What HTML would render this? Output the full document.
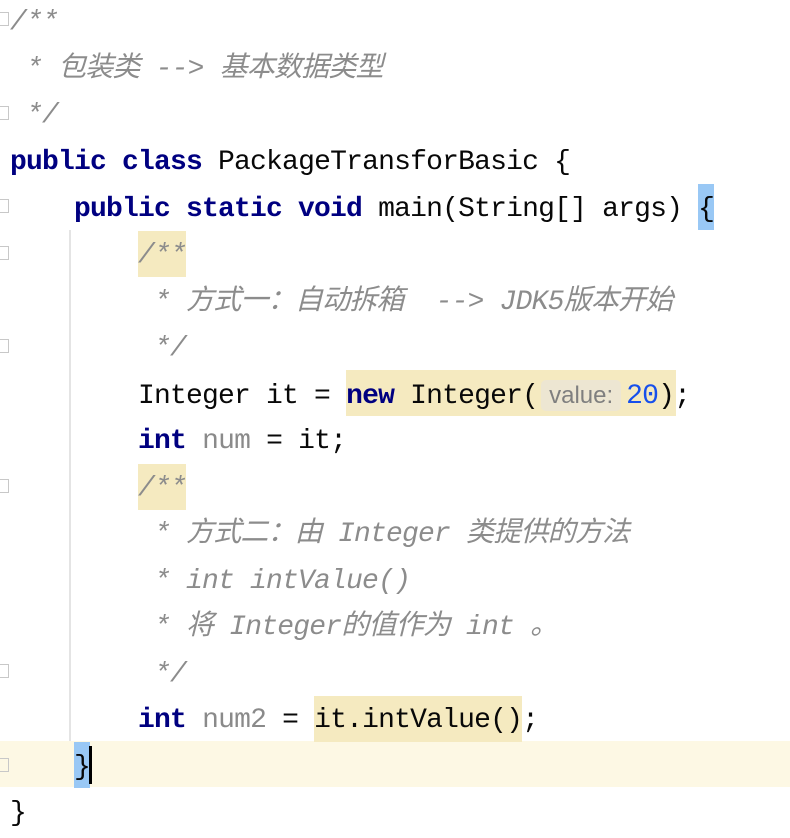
<!DOCTYPE html>
<html><head><meta charset="utf-8"><style>
body{margin:0;width:790px;height:832px;background:#fff;position:relative;overflow:hidden;font-family:"Liberation Mono","Noto Sans CJK SC",monospace;font-size:28px;letter-spacing:-0.8px}
.l{position:absolute;left:10px;height:46.5px;line-height:46.5px;white-space:pre;color:#080808;}
.k{color:#000080;font-weight:bold}
.c{color:#8c8c8c;font-style:italic}
.g{color:#8a8a8a}
.n{color:#1750eb}
.h{position:absolute;background:#f5eac0;height:46px}
.b{position:absolute;background:#99c8f5;height:46px}
.hint{font-family:"Liberation Sans",sans-serif;font-size:24px;letter-spacing:0;color:#7f7f7f;background:#ede6d2;border-radius:5px;padding:2px 8px;margin:0 5px 0 3px}
.f{position:absolute;left:0;width:9px;height:14px;border:1.5px solid #c8c8c8;border-left:none;box-sizing:border-box}
</style></head><body>
<div style="position:absolute;left:0;top:741px;width:790px;height:46px;background:#fdf8e4"></div>
<div style="position:absolute;left:69px;top:230px;width:2px;height:511px;background:#e4e4e4"></div>
<div class="h" style="left:138px;top:231px;width:48px"></div>
<div class="h" style="left:138px;top:464px;width:48px"></div>
<div class="h" style="left:346px;top:370px;width:330px"></div>
<div class="h" style="left:314px;top:696px;width:208px"></div>
<div class="b" style="left:698px;top:184px;width:16px"></div>
<div class="b" style="left:74px;top:742px;width:16px"></div>
<div class="f" style="top:12px"></div>
<div class="f" style="top:106px"></div>
<div class="f" style="top:199px"></div>
<div class="f" style="top:246px"></div>
<div class="f" style="top:339px"></div>
<div class="f" style="top:479px"></div>
<div class="f" style="top:664px"></div>
<div class="f" style="top:758px"></div>

<div class="l c" style="top:0px">/**</div>
<div class="l c" style="top:47px"> * 包装类 --&gt; 基本数据类型</div>
<div class="l c" style="top:93px"> */</div>
<div class="l" style="top:140px"><span class="k">public class</span> PackageTransforBasic {</div>
<div class="l" style="top:187px">    <span class="k">public static void</span> main(String[] args) {</div>
<div class="l c" style="top:233px">        /**</div>
<div class="l c" style="top:280px">         * 方式一：自动拆箱  --&gt; JDK5版本开始</div>
<div class="l c" style="top:326px">         */</div>
<div class="l" style="top:373px">        Integer it = <span class="k">new</span> Integer(<span class="hint">value:</span><span class="n">20</span>);</div>
<div class="l" style="top:419px">        <span class="k">int</span> <span class="g">num</span> = it;</div>
<div class="l c" style="top:466px">        /**</div>
<div class="l c" style="top:512px">         * 方式二：由 Integer 类提供的方法</div>
<div class="l c" style="top:559px">         * int intValue()</div>
<div class="l c" style="top:605px">         * 将 Integer的值作为 int 。</div>
<div class="l c" style="top:652px">         */</div>
<div class="l" style="top:698px">        <span class="k">int</span> <span class="g">num2</span> = it.intValue();</div>
<div class="l" style="top:745px">    }</div>
<div style="position:absolute;left:89px;top:746px;width:2.5px;height:38px;background:#000"></div>
<div class="l" style="top:791px">}</div>
</body></html>
